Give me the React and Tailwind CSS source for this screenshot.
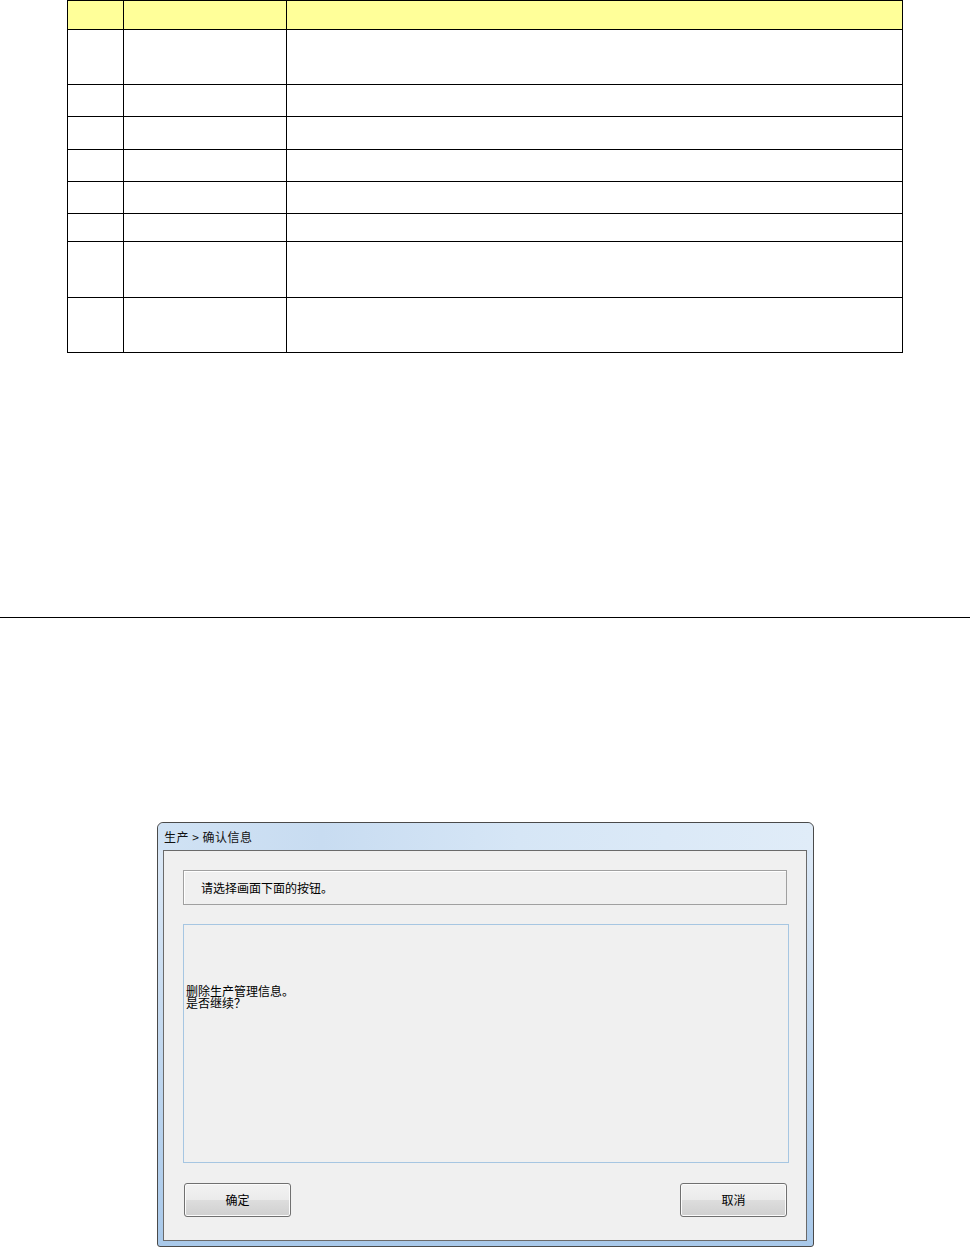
export default function App() {
  const rows = [29, 55, 32, 33, 32, 32, 28, 56, 55];
  const cjk = { fontFamily: '"Noto Sans CJK SC", "Noto Sans", sans-serif' };
  return (
    <div className="w-[970px] h-[1248px] bg-white overflow-hidden flex flex-col" style={cjk}>
      {/* Table */}
      <div className="ml-[67px] w-[836px] border-t border-l border-black flex flex-col">
        {rows.map((h, i) => (
          <div
            key={i}
            className={`grid grid-cols-[56px_163px_616px] ${i === 0 ? 'bg-[#ffff99]' : 'bg-white'}`}
            style={{ height: h }}
          >
            <div className="border-r border-b border-black" />
            <div className="border-r border-b border-black" />
            <div className="border-r border-b border-black" />
          </div>
        ))}
      </div>

      {/* Separator line */}
      <div className="mt-[264px] h-px w-full bg-black" />

      {/* Dialog window */}
      <div className="mt-[204px] ml-[157px] w-[657px] h-[425px] rounded-t-[6px] rounded-b-[3px] border border-[#4a4a4a] bg-[linear-gradient(to_bottom,#d3e3f4_0%,#dbe8f6_8%,#c9dcf0_40%,#a9c9ea_100%)] flex flex-col">
        {/* Title bar */}
        <div className="h-[27px] flex items-center pl-[6px] text-[12px] text-[#111] leading-none bg-[linear-gradient(to_right,#d0e2f4_0%,#c8dcf1_25%,#d6e6f6_55%,#e0ecf8_100%)] rounded-t-[6px]">
          <span className="tracking-[0.5px]">生产 &gt; 确认信息</span>
        </div>
        {/* Inner panel */}
        <div className="ml-[5px] mr-[6px] h-[391px] border border-[#6a6a6a] bg-[#f0f0f0] flex flex-col px-[19px] pt-[19px]">
          <div className="w-[604px] h-[35px] border border-[#a0a0a0] shadow-[inset_1px_1px_0_#ffffff] flex items-center pl-[17px] text-[12px] text-black leading-none">
            请选择画面下面的按钮。
          </div>
          <div className="mt-[19px] w-[606px] h-[239px] border border-[#a6c6e2] pl-[2px] pt-[60px] text-[12px] leading-[12px] text-black">
            <div>删除生产管理信息。</div>
            <div>是否继续？</div>
          </div>
          <div className="mt-[20px] ml-px w-[603px] flex justify-between">
            <button className="w-[107px] h-[34px] rounded-[3px] border border-[#707070] shadow-[inset_0_0_0_1px_#fbfbfb] bg-[linear-gradient(to_bottom,#f2f2f2_0%,#ebebeb_50%,#dddddd_50%,#d0d0d0_100%)] text-[12px] text-black leading-none" style={cjk}>
              确定
            </button>
            <button className="w-[107px] h-[34px] rounded-[3px] border border-[#707070] shadow-[inset_0_0_0_1px_#fbfbfb] bg-[linear-gradient(to_bottom,#f2f2f2_0%,#ebebeb_50%,#dddddd_50%,#d0d0d0_100%)] text-[12px] text-black leading-none" style={cjk}>
              取消
            </button>
          </div>
        </div>
      </div>
    </div>
  );
}
